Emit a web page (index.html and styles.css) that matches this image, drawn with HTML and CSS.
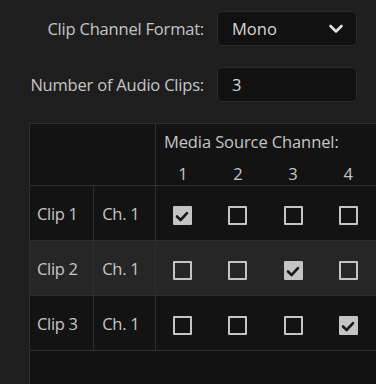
FILE: index.html
```html
<!DOCTYPE html>
<html lang="en">
<head>
    <meta charset="UTF-8">
    <meta name="viewport" content="width=device-width, initial-scale=1.0">
    <title>Audio Channels</title>
    <link rel="stylesheet" href="styles.css">
</head>
<body>

    <div class="form">
        <div class="field">
            <label class="field-label">Clip Channel Format:</label>
            <div class="control select">
                <span>Mono</span>
                <svg class="chevron" width="16" height="10" viewBox="0 0 16 10">
                    <path d="M2.5 2 L8 7.5 L13.5 2" fill="none" stroke="#e0e0e0" stroke-width="2.6" stroke-linecap="round" stroke-linejoin="round"/>
                </svg>
            </div>
        </div>
        <div class="field">
            <label class="field-label">Number of Audio Clips:</label>
            <div class="control">3</div>
        </div>
    </div>

    <div class="grid-wrap">
        <table class="channels">
            <colgroup>
                <col class="c-clip">
                <col class="c-ch">
                <col class="c-src"><col class="c-src2"><col class="c-src"><col class="c-src2">
            </colgroup>
            <thead>
                <tr class="head-top">
                    <th colspan="2" rowspan="2" class="blank"></th>
                    <th colspan="4" class="media-title">Media Source Channel:</th>
                </tr>
                <tr class="head-nums">
                    <th>1</th><th>2</th><th>3</th><th>4</th>
                </tr>
            </thead>
            <tbody>
                <tr>
                    <td class="name">Clip 1</td><td class="name ch">Ch. 1</td>
                    <td><span class="box checked"><svg viewBox="0 0 19 19"><path d="M4 10.5 L7.6 14 L14 7.2"/></svg></span></td>
                    <td><span class="box"></span></td>
                    <td><span class="box"></span></td>
                    <td><span class="box"></span></td>
                </tr>
                <tr class="alt">
                    <td class="name">Clip 2</td><td class="name ch">Ch. 1</td>
                    <td><span class="box"></span></td>
                    <td><span class="box"></span></td>
                    <td><span class="box checked"><svg viewBox="0 0 19 19"><path d="M4 10.5 L7.6 14 L14 7.2"/></svg></span></td>
                    <td><span class="box"></span></td>
                </tr>
                <tr>
                    <td class="name">Clip 3</td><td class="name ch">Ch. 1</td>
                    <td><span class="box"></span></td>
                    <td><span class="box"></span></td>
                    <td><span class="box"></span></td>
                    <td><span class="box checked"><svg viewBox="0 0 19 19"><path d="M4 10.5 L7.6 14 L14 7.2"/></svg></span></td>
                </tr>
            </tbody>
        </table>
    </div>

</body>
</html>
```

FILE: styles.css
```css
/* Audio channel dialog */
body {
    margin: 0;
    background: #1e1e1e;
    color: #c6c6c6;
    font-family: "Open Sans", "Noto Sans", sans-serif;
    font-size: 16.5px;
    height: 384px;
    overflow: hidden;
}

.form {
    display: flex;
    flex-direction: column;
    gap: 21px;
    padding-top: 11px;
}

.field {
    display: flex;
    align-items: center;
}

.field-label {
    width: 204px;
    text-align: right;
    margin-right: 13px;
    letter-spacing: -0.2px;
}

.control {
    box-sizing: border-box;
    width: 140px;
    height: 35px;
    background: #111111;
    border: 1px solid #2c2c2c;
    border-radius: 5px;
    padding: 0 14px;
    display: flex;
    align-items: center;
    color: #d6d6d6;
}

.select {
    justify-content: space-between;
    padding-right: 12px;
}

.grid-wrap {
    margin: 21px 0 0 29px;
    width: 400px;
    height: 300px;
    background: #121212;
    border-left: 1px solid #2f2f2f;
    border-top: 1px solid #2f2f2f;
}

.channels {
    border-collapse: collapse;
    table-layout: fixed;
    width: 346px;
    background: #131313;
}

.c-clip { width: 63px; }
.c-ch { width: 61px; }
.c-src { width: 54px; }
.c-src2 { width: 55px; }

.channels th {
    font-weight: normal;
    text-align: center;
    padding: 0;
}

.blank {
    border-right: 1px solid #2f2f2f;
    border-bottom: 1px solid #2f2f2f;
}

.head-top th.media-title {
    height: 34px;
    text-align: left;
    padding-left: 8px;
    letter-spacing: -0.1px;
}

.head-nums th {
    height: 27px;
    border-bottom: 1px solid #2f2f2f;
    vertical-align: bottom;
    padding-bottom: 0;
}

.channels td {
    height: 54px;
    border-bottom: 1px solid #2f2f2f;
    text-align: center;
    padding: 0;
}

.channels td.name {
    text-align: left;
    padding-left: 7px;
    border-right: 1px solid #2f2f2f;
    letter-spacing: -0.3px;
}

.channels td.ch {
    padding-left: 8px;
}

.alt td {
    background: #262626;
}

.box {
    display: inline-block;
    box-sizing: border-box;
    width: 19px;
    height: 19px;
    border: 2px solid #c4c4c4;
    border-radius: 1px;
    vertical-align: middle;
    position: relative;
}

.box.checked {
    background: #c4c4c4;
    border: none;
}

.box svg {
    display: block;
    width: 19px;
    height: 19px;
}

.box svg path {
    fill: none;
    stroke: #1a1a1a;
    stroke-width: 2.6;
    stroke-linecap: round;
    stroke-linejoin: round;
}
```
